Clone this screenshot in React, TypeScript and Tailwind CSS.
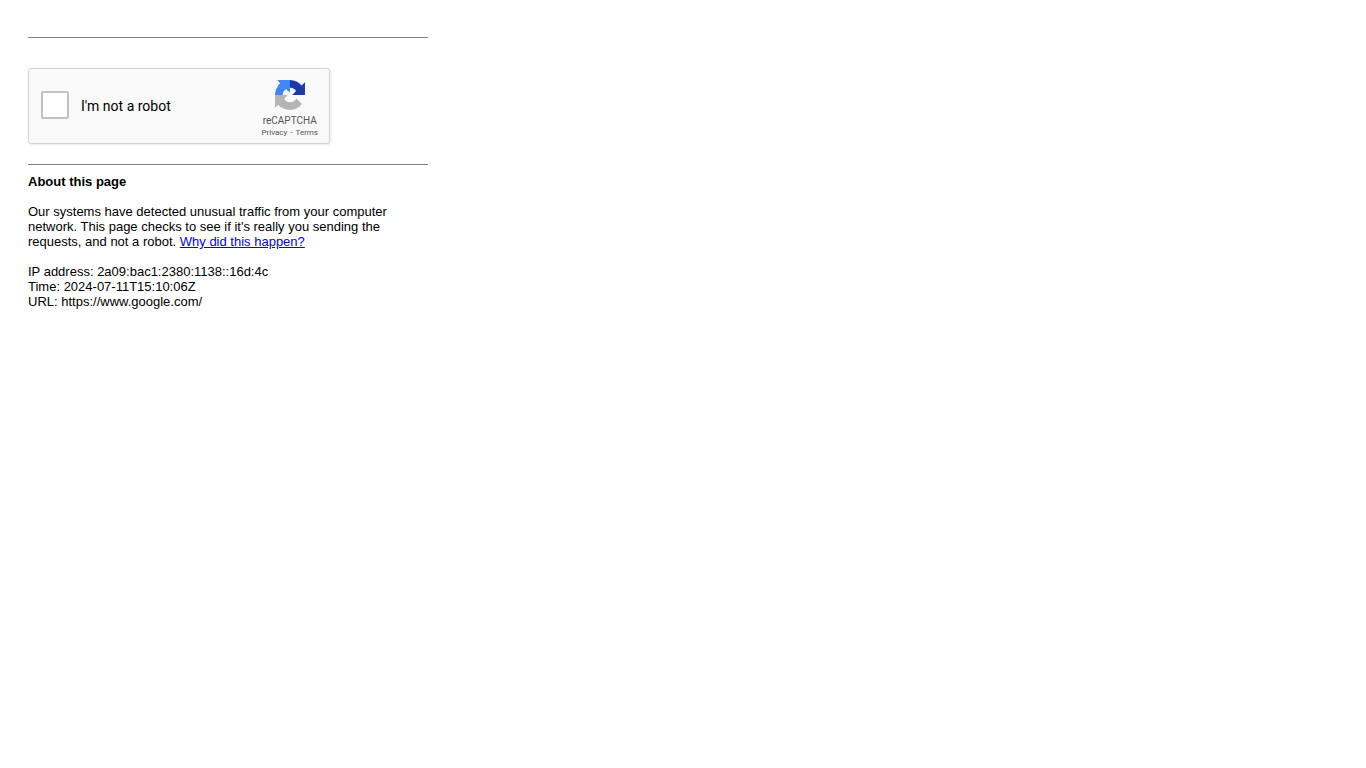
import React, { useState } from 'react';

const request = {
  ip: '2a09:bac1:2380:1138::16d:4c',
  time: '2024-07-11T15:10:06Z',
  url: 'https://www.google.com/',
};

function RecaptchaLogo() {
  return (
    <svg viewBox="0 0 64 64" className="w-[30px] h-[30px]" aria-hidden="true">
      <path
        fill="#1c3aa9"
        d="M64 31.955l-.033-1.37V4.687l-7.16 7.16C50.948 4.674 42.033.093 32.05.093c-10.4 0-19.622 4.96-25.458 12.64l11.736 11.86a15.55 15.55 0 0 1 4.754-5.334c2.05-1.6 4.952-2.906 8.968-2.906.485 0 .86.057 1.135.163 4.976.393 9.288 3.14 11.828 7.124l-8.307 8.307L64 31.953"
      />
      <path
        fill="#4285f4"
        d="M31.862.094l-1.37.033H4.594l7.16 7.16C4.58 13.147 0 22.06 0 32.046c0 10.4 4.96 19.622 12.64 25.458L24.5 45.768a15.55 15.55 0 0 1-5.334-4.754c-1.6-2.05-2.906-4.952-2.906-8.968 0-.485.057-.86.163-1.135.393-4.976 3.14-9.288 7.124-11.828l8.307 8.307L31.86.095"
      />
      <path
        fill="#b5b5b5"
        d="M.001 32.045l.033 1.37v25.898l7.16-7.16c5.86 7.173 14.774 11.754 24.76 11.754 10.4 0 19.622-4.96 25.458-12.64l-11.736-11.86a15.55 15.55 0 0 1-4.754 5.334c-2.05 1.6-4.952 2.906-8.968 2.906-.485 0-.86-.057-1.135-.163-4.976-.393-9.288-3.14-11.828-7.124l8.307-8.307c-10.522.04-22.4.066-27.295-.005"
      />
    </svg>
  );
}

function Captcha() {
  const [checked, setChecked] = useState(false);

  return (
    <div className="flex justify-between w-fit min-w-[302px] rounded-[3px] border border-[#d3d3d3] bg-[#f9f9f9] pl-3 pr-[11px] shadow-[1px_1px_3px_0_rgba(0,0,0,0.1)] font-[Roboto,sans-serif]">
      <div className="flex items-center gap-3 pt-[22px] pb-6">
        <input
          id="not-a-robot"
          type="checkbox"
          checked={checked}
          onChange={(e) => setChecked(e.target.checked)}
          className="appearance-none w-7 h-7 rounded-[2px] border-2 border-[#c1c1c1] bg-white checked:bg-[#4285f4]"
        />
        <label htmlFor="not-a-robot" className="pt-0.5 text-sm leading-4 text-black">
          I'm not a robot
        </label>
      </div>

      {/* Branding */}
      <div className="flex flex-col items-center pt-[11px] text-[#555]">
        <RecaptchaLogo />
        <span className="mt-[5px] text-[10px] leading-3">reCAPTCHA</span>
        <div className="flex gap-[3px] text-[8px] leading-3">
          <a href="#privacy">Privacy</a>
          <span>-</span>
          <a href="#terms">Terms</a>
        </div>
      </div>
    </div>
  );
}

export default function App() {
  return (
    <main className="max-w-[440px] px-5 pt-[37px] ml-2 font-['Liberation_Sans',Arial,sans-serif] text-[13px] leading-[15px] text-black">
      <hr className="border-[#808080] mb-[30px]" />
      <Captcha />
      <hr className="border-[#808080] mt-5 mb-[9px]" />

      <h1 className="font-bold mb-[15px]">About this page</h1>

      <p className="mb-[15px]">
        Our systems have detected unusual traffic from your computer network. This page checks to
        see if it's really you sending the requests, and not a robot.{' '}
        <a href="#why" className="text-[#0000ee] underline">
          Why did this happen?
        </a>
      </p>

      <p>IP address: {request.ip}</p>
      <p>Time: {request.time}</p>
      <p>URL: {request.url}</p>
    </main>
  );
}
